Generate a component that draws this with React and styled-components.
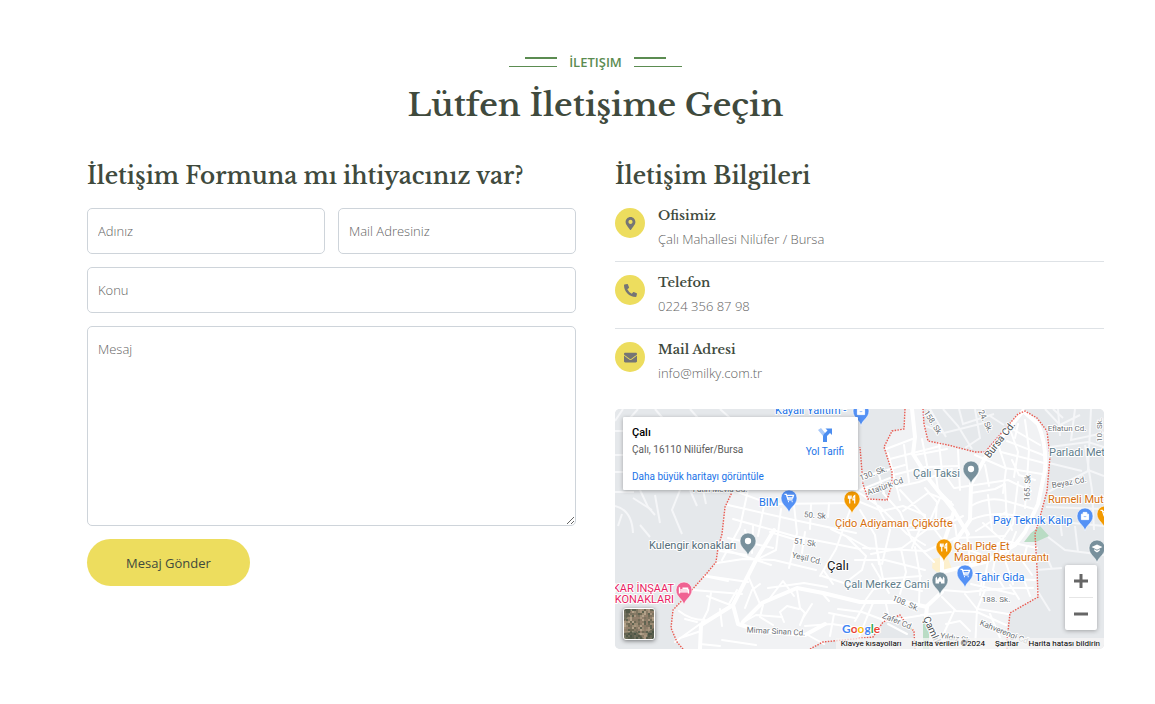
import React from "react";
import styled, { createGlobalStyle } from "styled-components";
import { FaMapMarkerAlt, FaPhoneAlt, FaEnvelope } from "react-icons/fa";

const GlobalStyle = createGlobalStyle`
  *, *::before, *::after { box-sizing: border-box; }
  body {
    margin: 0;
    background: #fff;
    color: #636363;
    font-family: "Open Sans", sans-serif;
    font-size: 13px;
    font-weight: 300;
    line-height: 20px;
  }
`;

const serif = `"Libre Baskerville", "Liberation Serif", serif`;

const Page = styled.main`
  padding: 52px 51px 55px 87px;
`;

const SectionHeader = styled.header`
  display: flex;
  flex-direction: column;
  align-items: center;
  gap: 10px;
  margin-bottom: 32px;
`;

const Eyebrow = styled.p`
  display: flex;
  align-items: center;
  gap: 12px;
  margin: 0;
  color: #5b8c51;
  font-weight: 600;
  font-size: 13px;
`;

const Rules = styled.span`
  display: flex;
  flex-direction: column;
  align-items: ${(p) => (p.$side === "left" ? "flex-end" : "flex-start")};
  gap: 7px;
  width: 48px;
  &::before {
    content: "";
    width: 32px;
    height: 2px;
    background: #5b8c51;
  }
  &::after {
    content: "";
    width: 48px;
    height: 1px;
    background: #5b8c51;
  }
`;

const Title = styled.h1`
  margin: 0;
  color: #404a3d;
  font: 600 32px/46px ${serif};
`;

const Columns = styled.div`
  display: grid;
  grid-template-columns: repeat(auto-fit, minmax(320px, 1fr));
  gap: 39px;
`;

const Column = styled.section`
  min-width: 0;
`;

const SubTitle = styled.h2`
  margin: 0 0 16px;
  color: #404a3d;
  font: 600 23px/32px ${serif};
`;

const Form = styled.form`
  display: grid;
  grid-template-columns: 1fr 1fr;
  gap: 13px;
`;

const Input = styled.input`
  display: block;
  grid-column: ${(p) => (p.$wide ? "1 / -1" : "auto")};
  width: 100%;
  height: ${(p) => (p.$tall ? "200px" : "46px")};
  padding: ${(p) => (p.$tall ? "12px 10px" : "0 10px")};
  border: 1px solid #ced4da;
  border-radius: 5px;
  background: #fff;
  color: #404a3d;
  font: inherit;
  resize: vertical;
  &::placeholder {
    color: #636363;
    opacity: 1;
  }
`;

const SubmitButton = styled.button`
  justify-self: start;
  height: 47px;
  padding: 0 39px;
  border: 0;
  border-radius: 24px;
  background: #eddd5e;
  color: #404a3d;
  font: 400 13px/20px "Open Sans", sans-serif;
  white-space: nowrap;
`;

const ContactList = styled.ul`
  display: grid;
  gap: 13px;
  margin: 0 0 26px;
  padding: 0;
  list-style: none;
`;

const ContactRow = styled.li`
  display: flex;
  gap: 13px;
  padding-bottom: 12px;
  border-bottom: 1px solid #dee2e6;
  &:last-child {
    padding-bottom: 0;
    border-bottom: 0;
  }
`;

const IconBadge = styled.span`
  display: grid;
  place-items: center;
  flex: none;
  width: 30px;
  height: 30px;
  border-radius: 50%;
  background: #eddd5e;
  color: #757575;
  font-size: 13px;
`;

const ContactTitle = styled.h3`
  margin: 0 0 5px;
  color: #404a3d;
  font: 600 13px/16px ${serif};
`;

const ContactText = styled.p`
  margin: 0;
`;

const MapFrame = styled.div`
  position: relative;
  height: 240px;
  overflow: hidden;
  border-radius: 5px;
  background: #e5e8eb;
  font-family: Roboto, sans-serif;
  font-weight: 400;
`;

const MapCanvas = styled.svg`
  display: block;
  width: 100%;
  height: 100%;
  font-family: Roboto, sans-serif;
`;

const PlaceCard = styled.div`
  position: absolute;
  top: 8px;
  left: 8px;
  display: flex;
  justify-content: space-between;
  width: 235px;
  height: 73px;
  padding: 9px 14px 6px 9px;
  border-radius: 1px;
  background: #fff;
  box-shadow: 0 1px 4px rgba(0, 0, 0, 0.3);
  font-size: 10px;
  line-height: 14px;
  white-space: nowrap;
`;

const PlaceInfo = styled.div`
  display: flex;
  flex-direction: column;
  color: #5b5b5b;
`;

const PlaceName = styled.strong`
  margin-bottom: 3px;
  color: #000;
  font-weight: 500;
  font-size: 11px;
`;

const MapLink = styled.a`
  color: #1a73e8;
  text-decoration: none;
`;

const LargerMapLink = styled(MapLink)`
  margin-top: 13px;
`;

const Directions = styled(MapLink)`
  display: flex;
  flex-direction: column;
  align-items: center;
  gap: 1px;
  font-size: 10px;
`;

const ZoomPanel = styled.div`
  position: absolute;
  right: 7px;
  bottom: 19px;
  display: flex;
  flex-direction: column;
  width: 32px;
  border-radius: 2px;
  background: #fff;
  box-shadow: 0 1px 4px rgba(0, 0, 0, 0.3);
`;

const ZoomButton = styled.button`
  display: grid;
  place-items: center;
  height: 32px;
  padding: 0;
  border: 0;
  background: none;
`;

const ZoomDivider = styled.span`
  height: 1px;
  margin: 0 4px;
  background: #e6e6e6;
`;

const SatelliteButton = styled.button`
  position: absolute;
  left: 8px;
  bottom: 9px;
  width: 32px;
  height: 32px;
  padding: 0;
  overflow: hidden;
  border: 1px solid #fff;
  border-radius: 3px;
  box-shadow: 0 1px 4px rgba(0, 0, 0, 0.5);
`;

const Attribution = styled.div`
  position: absolute;
  right: 0;
  bottom: 0;
  display: flex;
  gap: 10px;
  padding: 0 4px 0 5px;
  background: rgba(245, 245, 245, 0.75);
  color: #000;
  font-size: 8px;
  line-height: 11px;
`;

const AttributionButton = styled.button`
  padding: 0;
  border: 0;
  background: none;
  color: inherit;
  font: inherit;
`;

const AttributionLink = styled.a`
  color: inherit;
  text-decoration: none;
`;

const blue = "#5491f5";
const orange = "#f29900";
const slate = "#78909c";
const pink = "#f06292";

const TOWN =
  "M905 409 L904 429 L892 431 L884 447 L892 472 L887 500 L868 499 L863 484 L860 447 L800 470 L735 486 L725 507 L722 534 L718 548 L716 562 L707 573 L690 592 L673 610 L671 628 L677 642 L683 649 L810 649 L823 642 L843 640 L873 637 L883 622 L900 615 L907 625 L914 631 L915 649 L1007 649 L1007 640 L1010 613 L1038 597 L1037 568 L1035 534 L1040 517 L1047 491 L1050 457 L1047 431 L1037 418 L1025 411 L1018 414 L985 452 L975 452 L948 445 L928 441 L924 424 L923 409 Z";

const BORDERS = [
  "M905 409 L904 429 L892 431 L884 447 L892 472 L892 484 L887 500 L868 499 L863 484 L860 447",
  "M735 486 L725 507 L722 534 L718 548 L716 562 L707 573 L690 592 L673 610 L671 628 L677 642 L683 649",
  "M810 649 L823 642 L843 640 L873 637 L883 622 L900 615 L907 625 L914 631 L915 649",
  "M1007 649 L1007 640 L1010 613 L1038 597 L1037 568 L1035 534 L1040 517 L1047 491 L1050 457 L1047 431 L1037 418 L1025 411 L1018 414 L985 452 L975 452 L948 445 L928 441 L924 424 L923 409",
];

const OUTER_ROADS = [
  "M623 409 L615 421 M638 409 L630 418 M690 409 L707 428 M615 431 L624 431 M615 455 L624 455 M615 472 L624 472",
  "M655 409 L666 422 M615 506 Q632 510 633 533 M633 498 L652 510 M655 495 L660 523 M680 490 L672 510 L682 534",
  "M640 490 L648 507 L655 515 M690 490 L697 506 M703 490 L706 504 M720 409 L730 418 M615 492 L634 492",
  "M640 525 L650 537 M622 514 L618 526",
  "M1045 409 L1060 425 L1080 415 M1053 409 L1063 418 M1075 409 L1071 440 L1104 433 M1050 447 L1088 442 L1104 447",
  "M1058 409 L1060 436 M1091 409 L1088 470 L1104 476 M1049 463 L1082 471 M1048 492 L1090 470 M1046 507 L1104 509",
  "M1085 445 L1092 490 L1094 530 M1042 520 L1104 526 M1048 537 L1065 550 L1104 555 M1075 526 L1078 552 M1060 521 L1062 536",
  "M1036 570 L1062 568 M1037 590 L1050 611 M1046 555 L1052 569 M930 409 L946 437 M943 409 L958 426 L972 449",
  "M975 409 L980 438 L965 448 M990 416 L1004 425 M959 409 L963 424 L994 414 M923 425 L944 433 L984 423",
];

const ROADS = [
  "M886 449 L915 438 M890 459 L940 446 M893 475 L925 467 L958 466 M896 487 L919 482 L952 469 M888 453 L900 500 M904 445 L909 482 M922 439 L928 470",
  "M915 455 L947 449 M890 478 L860 490 M862 477 L905 465 M879 475 L884 493 M865 490 L887 486",
  "M939 443 L942 471 L954 488 M958 450 L960 490 M935 468 L938 490 L953 505 M955 488 L1008 480 L1031 491",
  "M975 455 L1005 468 L1042 474 M985 465 L989 486 M999 447 L1006 469 L1003 493 M1011 432 L1018 452 L1014 477",
  "M1014 430 L1040 445 M1007 441 L1043 455 M1001 452 L1044 463 M1025 420 L1029 450 L1025 508 M1018 424 L1015 438",
  "M971 493 L995 489 L1005 484 M971 506 Q988 496 1006 501 L1034 509 M970 520 Q998 508 1033 520 M976 531 L1006 512 L1012 530",
  "M988 495 L992 530 M1005 485 L1007 525 M1018 482 L1013 524 L999 544 M1035 480 L1019 475 L1012 460",
  "M735 491 L770 504 L858 503 M728 505 L794 520 L856 533 M733 519 L794 536 L860 549 M728 538 L773 548 M723 549 L771 565",
  "M717 563 L743 559 L774 560 L816 570 M707 576 L748 582 M693 590 L742 594 M704 576 L728 581 M720 551 L747 555",
  "M748 490 L740 527 L722 560 M765 501 L758 536 M781 509 L776 550 L760 558 M794 505 L797 533 L789 568 M811 505 L810 529 M829 503 L828 517",
  "M850 510 L836 549 L820 576 M831 529 L852 539 L870 549 M860 510 L875 535 L879 564 M846 536 L866 556 L862 570 L845 583",
  "M745 530 L749 550 M753 526 L752 553 M770 532 L800 541 M822 576 L850 585 M824 571 L833 584 M805 532 L802 553",
  "M860 502 L882 511 L903 506 L925 515 M874 500 L890 530 L882 564 M855 490 L880 507 L907 534 L925 545",
  "M883 493 L900 512 L912 540 L934 562 M900 490 L925 517 M903 511 L928 493 L951 502 M910 530 L938 529 L963 516",
  "M925 488 L937 502 L935 530 L951 551 M925 517 L912 548 M940 498 L926 530 L902 548 L871 554 M951 517 L925 524 L889 527",
  "M863 548 L926 551 L955 538 L1005 536 M855 560 L885 560 L925 570 M877 549 L883 579 L921 576 M872 564 L889 593",
  "M901 549 L906 572 L900 594 M915 547 L920 576 L919 603 M875 589 L900 584 M865 601 L880 580 M900 586 L922 591",
  "M955 525 L958 546 L980 554 M983 523 L1002 540 L1027 546 L1023 562 L1032 575 M998 543 L993 570 L1004 588",
  "M967 535 L971 570 M1016 532 L1005 560 L1013 584 M961 570 L989 578 L1035 580 M988 561 L983 588 M1028 546 L1037 548",
  "M942 590 L967 592 L1010 588 L1033 588 M971 584 L1014 594 M982 578 L980 595 M1010 585 L1019 599 M1023 577 L1030 596",
  "M768 588 L804 583 L827 587 M770 598 L783 581 L794 596 M745 608 L752 590 L760 584 M760 604 L748 576 L752 566",
  "M797 590 L800 608 L805 613 L800 625 M812 604 L803 618 M799 609 L787 606 L780 612 L784 622 M763 605 L760 617 L773 625",
  "M822 593 L829 601 M805 626 L832 624 L857 628 M829 613 L855 618 M834 614 L830 636 M806 634 L824 644",
  "M838 609 L862 612 L886 621 M866 602 L855 621 M886 604 L889 618 M873 603 L867 617 L858 640",
  "M679 611 Q690 620 705 620 M700 624 L675 642 M685 619 L697 622 M701 631 L680 638 M720 609 L722 626 M711 593 L708 610 L700 626",
  "M733 606 L707 596 M737 590 L729 604 M740 624 L756 615 L782 617 M722 640 L756 645 M700 644 L720 646",
  "M942 597 L956 611 L977 612 L1006 625 M954 611 L944 633 M965 594 L977 609 L975 649 M985 590 L978 607 M990 614 L1001 640 M946 624 L960 621 L970 631",
  "M921 615 L951 612 M886 621 L924 615 M940 640 L960 646 M888 624 L907 634 M978 609 L1008 614",
];

const MAIN_ROADS = [
  "M1023 411 L985 458 L971 484 L970 520 L955 542 M912 409 L915 437 L913 454 L928 478 L954 511 L968 534",
  "M1023 411 L1038 424 Q1047 445 1045 470 L1038 504 L1025 532 L1015 545 L985 562 L942 572",
  "M954 511 L948 530 L942 548 L942 592 L927 606 L926 617 L937 649",
  "M700 649 L701 625 L733 605 L757 558 L774 530 M733 605 L738 624 L760 631 L805 635 L825 624",
  "M743 622 L762 603 L797 588 L823 593 L860 602 L905 602 L927 607",
];

const STREETS = [
  ["158. Sk", 933, 422, 58],
  ["24. Sk.", 986, 421, 65],
  ["Eflatun Cd.", 1067, 428, 0],
  ["10. Sk.", 1099, 430, -90],
  ["Beyaz Cd.", 1069, 482, -10],
  ["165. Sk", 1027, 488, -88],
  ["130. Sk.", 873, 473, -20],
  ["Atatürk Cd", 885, 486, -20],
  ["50. Sk", 815, 515, 5],
  ["51. Sk", 805, 542, 8],
  ["Yeşil Cd.", 807, 558, 13],
  ["Mimar Sinan Cd.", 776, 631, 3],
  ["108. Sk.", 906, 603, 24],
  ["Zafer Cd.", 898, 621, 22],
  ["188. Sk.", 996, 599, 0],
  ["Kahverengi Cd.", 1005, 632, 22],
  ["Yıldız Sk.", 956, 638, 10],
  ["Fatih Mevla Cd.", 720, 489, 0],
];

const PLACES = [
  ["Kayalı Yalıtım -", 775, 414, "#1a73e8"],
  ["BIM", 759, 506, "#1a73e8"],
  ["Çido Adiyaman Çiğköfte", 835, 527, "#d56e0c"],
  ["Çalı Taksi", 913, 477, "#607d8b"],
  ["Pay Teknik Kalıp", 993, 524, "#1a73e8"],
  ["Rumeli Mutfağı", 1048, 503, "#d56e0c"],
  ["Parladı Metal", 1049, 456, "#607d8b"],
  ["Kulengir konakları", 649, 549, "#546e7a"],
  ["Çalı Merkez Cami", 844, 588, "#607d8b"],
  ["Çalı Pide Et", 954, 550, "#d56e0c"],
  ["Mangal Restaurantı", 954, 561, "#d56e0c"],
  ["Tahir Gida", 975, 581, "#1a73e8"],
];

const glyphs = {
  cart: <path d="M-5 -4 H-3 L-1 2 H4 M-2 -3 H5 L4 0 H-1 M-1 4 h1 M3 4 h1" fill="none" stroke="#fff" strokeWidth="1.4" />,
  bag: <path d="M-4 -2 H4 V4 H-4 Z M-2 -2 V-4 H2 V-2 M-2 0 Q0 3 2 0" fill="#fff" stroke="#fff" strokeWidth="1" fillRule="evenodd" />,
  food: <path d="M-4 -4 V-1 H-1 V-4 M-2.5 -4 V5 M3 5 V-4 Q1 -3 1 1 H3" fill="none" stroke="#fff" strokeWidth="1.3" />,
  dot: <circle r="3.500" fill="#fff" />,
  mosque: <path d="M-5 4 V-2 L-4 -4 L-3 -2 V0 Q-2 -2 0 -4 Q2 -2 3 0 V-2 L4 -4 L5 -2 V4 H1 V2 H-1 V4 Z" fill="#fff" />,
  bed: <path d="M-5 -3 V4 M-5 2 H5 V4 M5 2 V0 H-4 M-1 -1 V-2 H4 V0" fill="none" stroke="#fff" strokeWidth="1.5" />,
  school: <path d="M0 -4 L6 -1 L0 2 L-6 -1 Z M-3 1 V3 L0 5 L3 3 V1 L0 3 Z" fill="#fff" />,
};

const PINS = [
  [861, 411, blue, "bag"],
  [789, 498, blue, "cart"],
  [852, 499, orange, "food"],
  [971, 469, slate, "dot"],
  [1085, 516, blue, "bag"],
  [1105, 514, orange, "cart"],
  [748, 541, slate, "dot"],
  [940, 580, slate, "mosque"],
  [944, 547, orange, "food"],
  [965, 573, blue, "cart"],
  [684, 590, pink, "bed"],
  [1097, 548, slate, "school"],
];

function Pin({ x, y, color, glyph }) {
  return (
    <g transform={`translate(${x} ${y})`}>
      <path d="M0 15 C-1 9 -8 7 -8 0 A8 8 0 0 1 8 0 C8 7 1 9 0 15 Z" fill={color} stroke="#fff" strokeWidth="0.6" />
      <g transform="scale(0.9)">{glyphs[glyph]}</g>
    </g>
  );
}

function TownMap() {
  return (
    <MapCanvas viewBox="615 409 489 240" preserveAspectRatio="xMidYMid slice" role="img" aria-label="Çalı haritası">
      <rect x="0" y="300" width="1800" height="500" fill="#e5e8eb" />
      <path d={TOWN} fill="#f1f2f4" />
      <path d="M1031 533 L1040 526 L1049 536 L1036 542 L1024 542 Z M923 617 L929 632 L929 649 L923 649 Z" fill="#b9dcc4" />
      <path d="M933 559 L947 556 L952 569 L940 575 L932 568 Z" fill="#fdf0cd" />
      <g fill="none" stroke="#f5f6f8" strokeWidth="2">
        {OUTER_ROADS.map((d) => <path key={d} d={d} />)}
      </g>
      <g fill="none" stroke="#fff" strokeLinejoin="round" strokeLinecap="round">
        <g strokeWidth="2">{ROADS.map((d) => <path key={d} d={d} />)}</g>
        <g strokeWidth="4">{MAIN_ROADS.map((d) => <path key={d} d={d} />)}</g>
      </g>
      <g fill="none" stroke="#ea5a50" strokeWidth="1.4" strokeDasharray="1.5 1.3">
        {BORDERS.map((d) => <path key={d} d={d} />)}
      </g>
      <g stroke="#fff" strokeWidth="2" strokeLinejoin="round" paintOrder="stroke">
        <g fill="#6b7075" fontSize="8" textAnchor="middle">
          {STREETS.map(([name, x, y, angle]) => (
            <text key={name} transform={`translate(${x} ${y}) rotate(${angle})`} dy="3">{name}</text>
          ))}
        </g>
        <g fill="#4b4f54" fontSize="10" textAnchor="middle">
          <text transform="translate(1000 440) rotate(-52)" dy="3">Bursa Cd.</text>
          <text transform="translate(932 631) rotate(66)" dy="3">Çamlık</text>
        </g>
        <g fontSize="11">
          {PLACES.map(([name, x, y, fill]) => (
            <text key={name} x={x} y={y} fill={fill}>{name}</text>
          ))}
          <g fill="#e91e63" textAnchor="end">
            <text x="674" y="592">KAR İNŞAAT</text>
            <text x="674" y="603">KONAKLARI</text>
          </g>
          <text x="827" y="570" fill="#202124" fontSize="13">Çalı</text>
        </g>
      </g>
      {PINS.map(([x, y, color, glyph]) => (
        <Pin key={`${x}-${y}`} x={x} y={y} color={color} glyph={glyph} />
      ))}
      <text x="842" y="633" fontFamily="Lato, sans-serif" fontSize="12" fontWeight="700" stroke="#fff" strokeWidth="2" paintOrder="stroke">
        <tspan fill="#4285f4">G</tspan>
        <tspan fill="#ea4335">o</tspan>
        <tspan fill="#fbbc04">o</tspan>
        <tspan fill="#4285f4">g</tspan>
        <tspan fill="#34a853">l</tspan>
        <tspan fill="#ea4335">e</tspan>
      </text>
    </MapCanvas>
  );
}

const TERRAIN = ["#8a7b66", "#9b8c74", "#6f6a55", "#a8957e", "#7d7460", "#927f6b", "#b3a28a", "#5f6350"];

function SatelliteTile() {
  const cells = [];
  let seed = 17;
  for (let row = 0; row < 15; row += 1) {
    for (let col = 0; col < 15; col += 1) {
      seed = (seed * 16807) % 2147483647;
      cells.push(
        <rect key={`${row}-${col}`} x={col * 2} y={row * 2} width="2" height="2" fill={TERRAIN[(seed >> 8) % TERRAIN.length]} />
      );
    }
  }
  return (
    <svg width="30" height="30" viewBox="0 0 30 30" display="block" aria-hidden="true">
      {cells}
      <path d="M0 0 H8 L3 9 L0 12 Z M0 24 L12 22 L20 30 H0 Z M24 23 L30 19 V30 H22 Z" fill="#38483a" opacity="0.5" />
    </svg>
  );
}

const CONTACTS = [
  { title: "Ofisimiz", text: "Çalı Mahallesi Nilüfer / Bursa", Icon: FaMapMarkerAlt },
  { title: "Telefon", text: "0224 356 87 98", Icon: FaPhoneAlt },
  { title: "Mail Adresi", text: "info@milky.com.tr", Icon: FaEnvelope },
];

function TextField({ label, name, type = "text", wide, multiline }) {
  return (
    <Input
      as={multiline ? "textarea" : "input"}
      type={multiline ? undefined : type}
      name={name}
      aria-label={label}
      placeholder={label}
      $wide={wide}
      $tall={multiline}
    />
  );
}

export default function App() {
  return (
    <>
      <GlobalStyle />
      <Page>
        <SectionHeader>
          <Eyebrow>
            <Rules $side="left" />
            İLETIŞIM
            <Rules $side="right" />
          </Eyebrow>
          <Title>Lütfen İletişime Geçin</Title>
        </SectionHeader>
        <Columns>
          <Column>
            <SubTitle>İletişim Formuna mı ihtiyacınız var?</SubTitle>
            <Form onSubmit={(event) => event.preventDefault()}>
              <TextField label="Adınız" name="name" />
              <TextField label="Mail Adresiniz" name="email" type="email" />
              <TextField label="Konu" name="subject" wide />
              <TextField label="Mesaj" name="message" wide multiline />
              <SubmitButton type="submit">Mesaj Gönder</SubmitButton>
            </Form>
          </Column>
          <Column>
            <SubTitle>İletişim Bilgileri</SubTitle>
            <ContactList>
              {CONTACTS.map(({ title, text, Icon }) => (
                <ContactRow key={title}>
                  <IconBadge><Icon /></IconBadge>
                  <div>
                    <ContactTitle>{title}</ContactTitle>
                    <ContactText>{text}</ContactText>
                  </div>
                </ContactRow>
              ))}
            </ContactList>
            <MapFrame>
              <TownMap />
              <PlaceCard>
                <PlaceInfo>
                  <PlaceName>Çalı</PlaceName>
                  Çalı, 16110 Nilüfer/Bursa
                  <LargerMapLink href="#harita">Daha büyük haritayı görüntüle</LargerMapLink>
                </PlaceInfo>
                <Directions href="#yol-tarifi">
                  <svg width="18" height="18" viewBox="0 0 18 18" aria-hidden="true">
                    <path d="M2 4 L5 2 L10 8 V16 H7 V10 Z" fill="#a9c9f8" />
                    <path d="M7 16 V11 Q7 9 8 8 L11.500 4.500 L9.500 2.500 H16 V9 L14 7 L11 10 V16 Z" fill="#4b8df0" />
                  </svg>
                  Yol Tarifi
                </Directions>
              </PlaceCard>
              <SatelliteButton type="button" aria-label="Uydu görüntüsünü göster">
                <SatelliteTile />
              </SatelliteButton>
              <ZoomPanel>
                <ZoomButton type="button" aria-label="Yakınlaştır">
                  <svg width="14" height="14" viewBox="0 0 14 14" aria-hidden="true">
                    <path d="M7 0 V14 M0 7 H14" stroke="#666" strokeWidth="3" />
                  </svg>
                </ZoomButton>
                <ZoomDivider />
                <ZoomButton type="button" aria-label="Uzaklaştır">
                  <svg width="14" height="14" viewBox="0 0 14 14" aria-hidden="true">
                    <path d="M0 7 H14" stroke="#666" strokeWidth="3" />
                  </svg>
                </ZoomButton>
              </ZoomPanel>
              <Attribution>
                <AttributionButton type="button">Klavye kısayolları</AttributionButton>
                <span>Harita verileri ©2024</span>
                <AttributionLink href="#sartlar">Şartlar</AttributionLink>
                <AttributionLink href="#hata-bildir">Harita hatası bildirin</AttributionLink>
              </Attribution>
            </MapFrame>
          </Column>
        </Columns>
      </Page>
    </>
  );
}
